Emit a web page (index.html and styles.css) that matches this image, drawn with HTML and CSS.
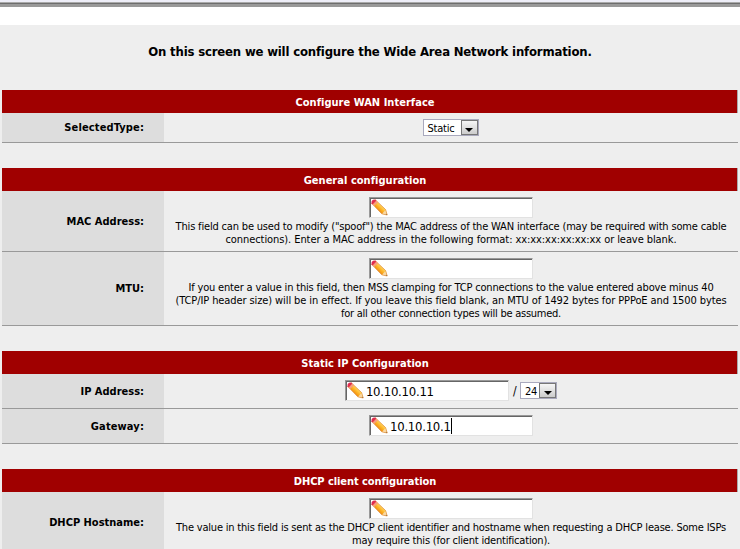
FILE: index.html
```
<!DOCTYPE html>
<html lang="en">
<head>
<meta charset="utf-8">
<title>WAN configuration</title>
<link rel="stylesheet" href="styles.css">
</head>
<body>
<svg class="defs" width="0" height="0" aria-hidden="true">
  <defs>
    <linearGradient id="wood" x1="0" y1="1" x2="1" y2="0">
      <stop offset=".35" stop-color="#ee8a14"/>
      <stop offset=".48" stop-color="#fdb020"/>
      <stop offset=".62" stop-color="#ffd45c"/>
    </linearGradient>
    <symbol id="pencil" viewBox="0 0 17 17">
      <path d="M.8 4.4 4.4.9 14.6 10.6 16.2 16 10.8 14.8Z" fill="url(#wood)" stroke="#dc8630" stroke-width=".7" stroke-linejoin="round"/>
      <path d="M.5 4.2Q.1.4 4.2.6L5.4 1.7 1.7 5.5Z" fill="#e02c50"/>
      <path d="M1.7 5.5 5.4 1.7 7 3.2 3.1 7Z" fill="#f59c80"/>
      <path d="M11.2 14.5 14.3 11.2 15.9 15.7Z" fill="#f8d8a4"/>
      <path d="M14.4 15.5 15.7 14.4 16.3 16.1Z" fill="#a06a38"/>
    </symbol>
  </defs>
</svg>
<header class="chrome"></header>
<main class="page">
  <h1 class="intro">On this screen we will configure the Wide Area Network information.</h1>

  <section class="panel">
    <h2 class="bar">Configure WAN Interface</h2>
    <div class="row row-select">
      <div class="label label-wide">SelectedType:</div>
      <div class="value"><span class="select"><span class="option">Static</span><span class="arrow"></span></span></div>
    </div>
  </section>

  <section class="panel">
    <h2 class="bar">General configuration</h2>
    <div class="row row-mac">
      <div class="label">MAC Address:</div>
      <div class="value">
        <div class="field"><svg class="pencil"><use href="#pencil"/></svg></div>
        <p class="help"><span class="line t1">This field can be used to modify ("spoof") the MAC address of the WAN interface (may be required with some cable</span>
        <span class="line t2">connections). Enter a MAC address in the following format: xx:xx:xx:xx:xx:xx or leave blank.</span></p>
      </div>
    </div>
    <div class="row row-mtu">
      <div class="label">MTU:</div>
      <div class="value">
        <div class="field"><svg class="pencil"><use href="#pencil"/></svg></div>
        <p class="help"><span class="line t1">If you enter a value in this field, then MSS clamping for TCP connections to the value entered above minus 40</span>
        <span class="line t3">(TCP/IP header size) will be in effect. If you leave this field blank, an MTU of 1492 bytes for PPPoE and 1500 bytes</span>
        <span class="line t4">for all other connection types will be assumed.</span></p>
      </div>
    </div>
  </section>

  <section class="panel">
    <h2 class="bar">Static IP Configuration</h2>
    <div class="row row-single">
      <div class="label">IP Address:</div>
      <div class="value">
        <div class="inline">
          <div class="field"><svg class="pencil"><use href="#pencil"/></svg><span class="text">10.10.10.11</span></div>
          <span class="slash">/</span>
          <span class="select"><span class="option">24</span><span class="arrow"></span></span>
        </div>
      </div>
    </div>
    <div class="row row-single">
      <div class="label label-wide">Gateway:</div>
      <div class="value">
        <div class="field"><svg class="pencil"><use href="#pencil"/></svg><span class="text">10.10.10.1</span><span class="caret"></span></div>
      </div>
    </div>
  </section>

  <section class="panel">
    <h2 class="bar bar-tight">DHCP client configuration</h2>
    <div class="row row-dhcp">
      <div class="label">DHCP Hostname:</div>
      <div class="value">
        <div class="field"><svg class="pencil"><use href="#pencil"/></svg></div>
        <p class="help"><span class="line t5">The value in this field is sent as the DHCP client identifier and hostname when requesting a DHCP lease. Some ISPs</span>
        <span class="line t5">may require this (for client identification).</span></p>
      </div>
    </div>
  </section>
</main>
</body>
</html>
```
FILE: styles.css
```
* { box-sizing: border-box; }
html, body { height: 549px; overflow: hidden; }
body {
  margin: 0;
  background: #fff;
  color: #000;
  font: 11px/13px "DejaVu Sans Condensed", Tahoma, sans-serif;
}
.defs { display: block; }
.chrome {
  height: 7px;
  border-top: 2px solid #eeeef8;
  border-bottom: 3px solid #999;
  background: linear-gradient(#aaa 50%, #6d6d6d 50%);
}
.page {
  height: 524px;
  margin-top: 18px;
  padding: 0 2px;
  background: #eee;
  overflow: hidden;
}
.intro {
  height: 65px;
  margin: 0;
  padding-top: 18px;
  font-size: 13px;
  line-height: 17px;
  letter-spacing: -.176px;
  text-align: center;
}
.panel { margin-bottom: 25px; }
.bar {
  height: 23px;
  margin: 0;
  padding-right: 9px;
  border-right: 1px solid #aaa;
  background: #a00000;
  color: #fff;
  font-size: 11px;
  line-height: 25px;
  letter-spacing: .03px;
  text-align: center;
}
.bar-tight { letter-spacing: -.07px; }
.row {
  display: grid;
  grid-template-columns: 162px 1fr;
  border-bottom: 1px solid #999;
}
.row-select { height: 30px; }
.row-mac { height: 61px; }
.row-mtu { height: 74px; }
.row-single { height: 35px; }
.row-dhcp { height: 61px; }
.label {
  display: flex;
  align-items: center;
  justify-content: flex-end;
  padding-right: 20px;
  background: #ddd;
  font-weight: bold;
}
.label-wide { letter-spacing: .13px; }
.value {
  display: flex;
  flex-direction: column;
  align-items: center;
  padding-top: 6px;
}
.field {
  display: flex;
  align-items: center;
  width: 164px;
  height: 21px;
  border: 1px solid;
  border-color: #999 #e2e2e2 #e2e2e2 #999;
  box-shadow: inset 1px 1px #666;
  background: #fff;
}
.pencil { width: 17px; height: 17px; margin: 0 0 0 1px; flex: none; }
.text { margin-left: 2px; padding-top: 1px; font-size: 13px; line-height: 17px; letter-spacing: -.25px; }
.caret { width: 1px; height: 16px; background: #000; }
.help { margin: 2px 0 0; }
.line { display: block; text-align: center; white-space: nowrap; }
.t1 { letter-spacing: -.173px; }
.t2 { letter-spacing: -.077px; }
.t3 { letter-spacing: -.098px; }
.t4 { letter-spacing: -.252px; }
.t5 { letter-spacing: -.195px; }
.inline { display: flex; align-items: center; }
.slash { margin: 2px 3px 0 4px; font-size: 12px; width: 4px; }
.select {
  display: flex;
  height: 17px;
  padding: 1px;
  border: 1px solid #a9a9bd;
  background: #fff;
}
.option { padding: 1px 6px 0 2px; letter-spacing: -.2px; line-height: 14px; }
.inline .option { padding: 1px 2px 0 3px; }
.arrow {
  display: flex;
  align-items: center;
  justify-content: center;
  width: 17px;
  margin: -1px;
  margin-left: 0;
  border: 1px solid #777;
  background: linear-gradient(#f6f6f6, #ccc);
}
.arrow::after {
  content: "";
  margin-top: 4px;
  border: 4px solid transparent;
  border-top-color: #000;
  border-bottom: 0;
}
```
